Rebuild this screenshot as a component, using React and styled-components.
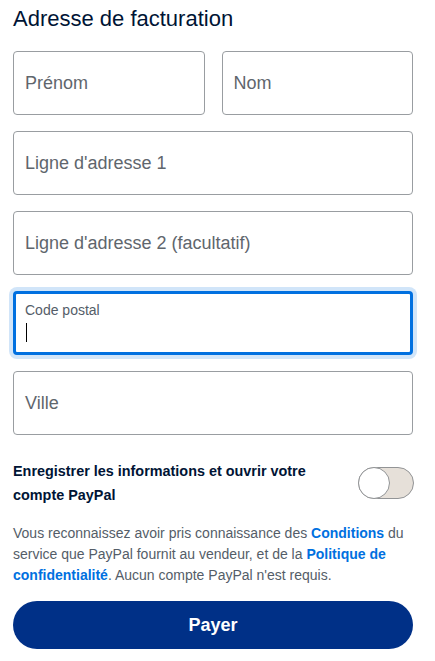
import styled, { createGlobalStyle } from "styled-components";

const GlobalStyle = createGlobalStyle`
  body {
    margin: 0;
    background: #fff;
    font-family: "Liberation Sans", Arial, sans-serif;
  }
`;

const Page = styled.div`
  padding: 5px 22px 12px 13px;
  display: flex;
  flex-direction: column;
`;

const Title = styled.h2`
  margin: 0 0 18px;
  font-size: 22px;
  line-height: 28px;
  font-weight: 400;
  color: #001435;
`;

const Fields = styled.div`
  display: flex;
  flex-direction: column;
  gap: 16px;
`;

const Row = styled.div`
  display: grid;
  grid-template-columns: 1fr 1fr;
  gap: 17px;
`;

const Field = styled.div`
  height: 64px;
  box-sizing: border-box;
  border: ${(p) => (p.$focused ? "3px solid #0070e0" : "1px solid #999da1")};
  border-radius: 4px;
  box-shadow: ${(p) => (p.$focused ? "0 0 0 4px #d1e5f9" : "none")};
  padding: ${(p) => (p.$focused ? "8px 9px" : "0 11px")};
  display: flex;
  flex-direction: column;
  justify-content: ${(p) => (p.$focused ? "flex-start" : "center")};
  background: #fff;
`;

const Placeholder = styled.span`
  font-size: 18px;
  color: #5f666d;
`;

const Label = styled.span`
  font-size: 14px;
  line-height: 16px;
  color: #545d68;
`;

const Caret = styled.span`
  width: 1px;
  height: 19px;
  margin-top: 5px;
  margin-left: 1px;
  background: #000;
`;

const SaveRow = styled.div`
  display: flex;
  align-items: center;
  justify-content: space-between;
  margin-top: 24px;
`;

const SaveText = styled.span`
  font-size: 14.4px;
  font-weight: 700;
  line-height: 24px;
  color: #001435;
  max-width: 310px;
`;

const Switch = styled.span`
  position: relative;
  width: 56px;
  height: 32px;
  box-sizing: border-box;
  border: 1px solid #929496;
  border-radius: 16px;
  background: #e6e0d9;
  flex-shrink: 0;
  margin-right: -1px;
`;

const Knob = styled.span`
  position: absolute;
  left: -1px;
  top: -1px;
  width: 32px;
  height: 32px;
  box-sizing: border-box;
  border: 1px solid #929496;
  border-radius: 50%;
  background: #fff;
`;

const Legal = styled.p`
  margin: 16px 0 0;
  font-size: 14px;
  line-height: 21px;
  color: #545d68;
`;

const Link = styled.a`
  color: #0070e0;
  font-weight: 700;
  text-decoration: none;
`;

const PayButton = styled.button`
  margin-top: 15px;
  height: 48px;
  border: none;
  border-radius: 24px;
  background: #003087;
  color: #fff;
  font-family: inherit;
  font-size: 18px;
  font-weight: 700;
`;

export default function App() {
  return (
    <>
      <GlobalStyle />
      <Page>
        <Title>Adresse de facturation</Title>
        <Fields>
          <Row>
            <Field><Placeholder>Prénom</Placeholder></Field>
            <Field><Placeholder>Nom</Placeholder></Field>
          </Row>
          <Field><Placeholder>Ligne d'adresse 1</Placeholder></Field>
          <Field><Placeholder>Ligne d'adresse 2 (facultatif)</Placeholder></Field>
          <Field $focused>
            <Label>Code postal</Label>
            <Caret />
          </Field>
          <Field><Placeholder>Ville</Placeholder></Field>
        </Fields>
        <SaveRow>
          <SaveText>Enregistrer les informations et ouvrir votre compte PayPal</SaveText>
          <Switch><Knob /></Switch>
        </SaveRow>
        <Legal>
          Vous reconnaissez avoir pris connaissance des <Link>Conditions</Link> du
          service que PayPal fournit au vendeur, et de la <Link>Politique de
          confidentialité</Link>. Aucun compte PayPal n'est requis.
        </Legal>
        <PayButton>Payer</PayButton>
      </Page>
    </>
  );
}
